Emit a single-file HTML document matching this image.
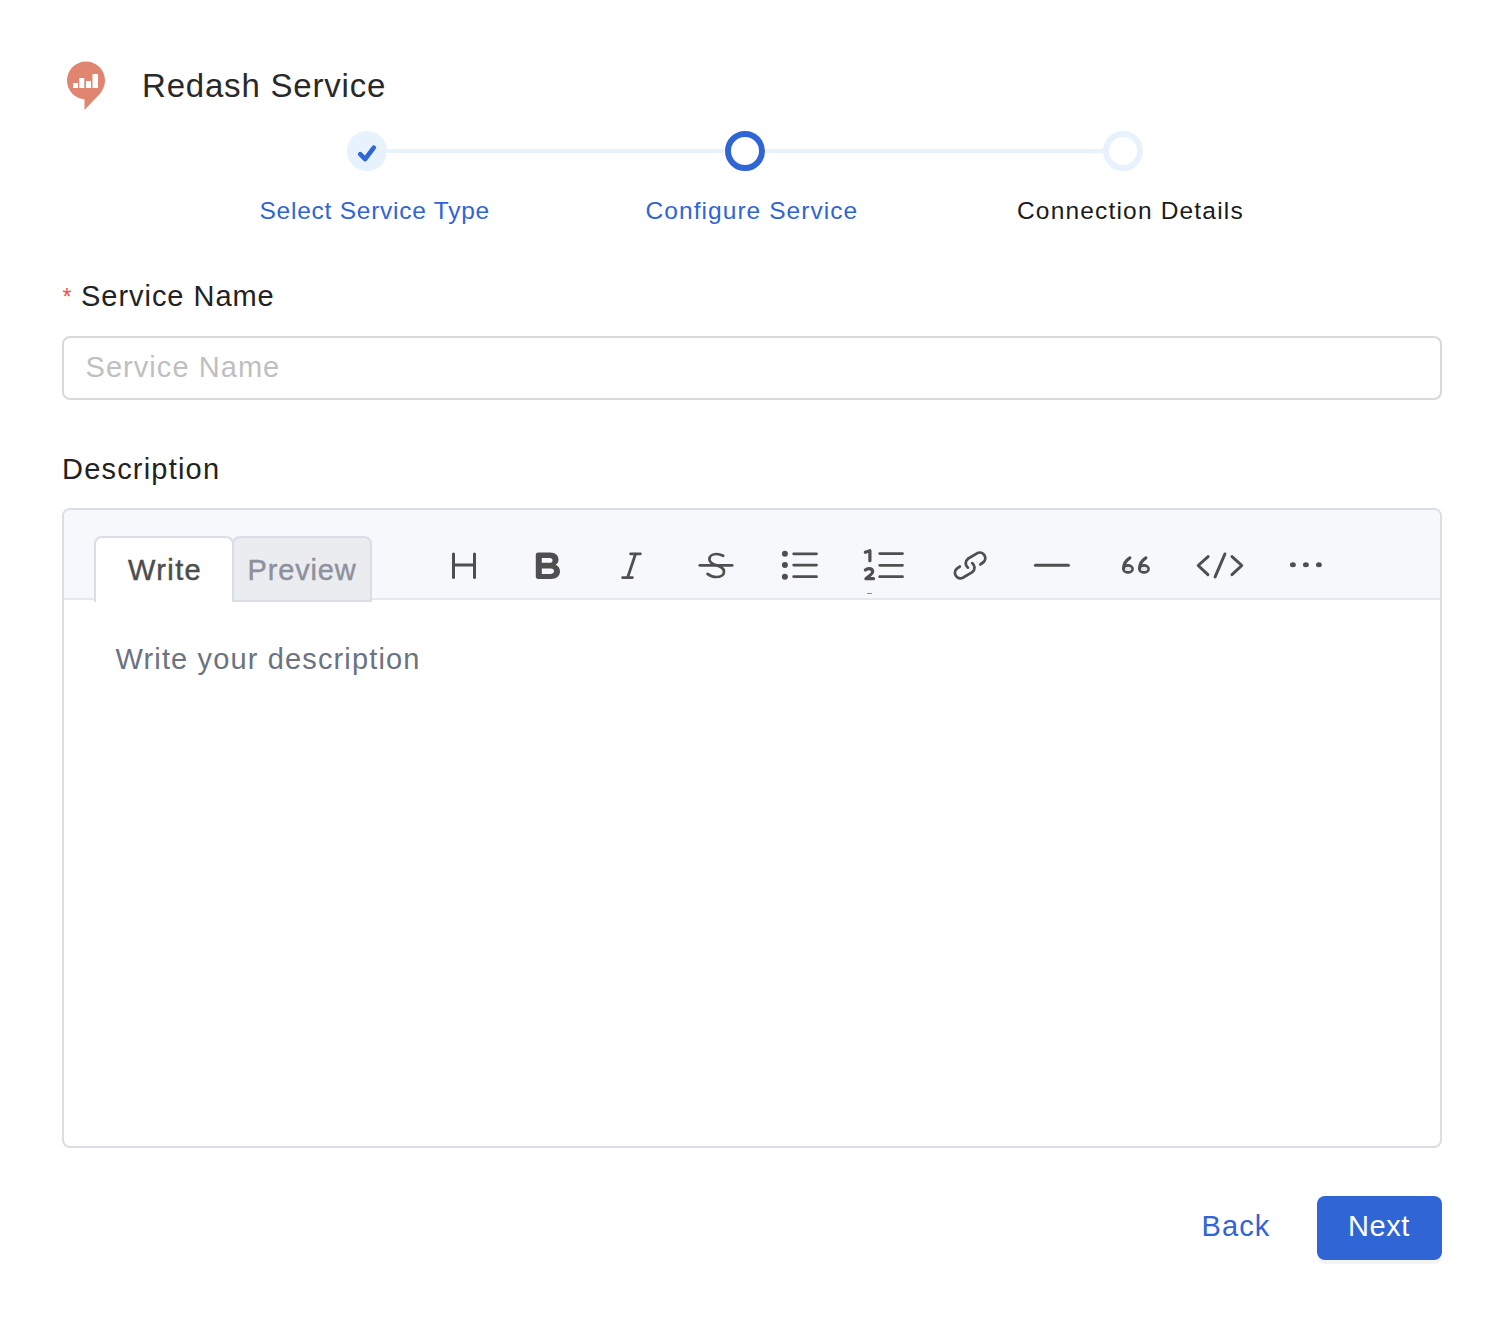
<!DOCTYPE html>
<html>
<head>
<meta charset="utf-8">
<style>
html,body{margin:0;padding:0;background:#fff;}
body{width:1506px;height:1328px;position:relative;overflow:hidden;font-family:"Liberation Sans",sans-serif;}
.t{position:absolute;white-space:nowrap;line-height:1;}
.abs{position:absolute;box-sizing:border-box;}
</style>
</head>
<body>
<!-- logo -->
<svg class="abs" style="left:60px;top:55px" width="60" height="60" viewBox="60 55 60 60">
  <circle cx="86" cy="80.5" r="19" fill="#DF8570"/>
  <path d="M84.5 95 L84.5 110 L101.3 92.3 Z" fill="#DF8570"/>
  <rect x="73" y="83" width="5" height="5" fill="#fff"/>
  <rect x="79.3" y="78" width="5" height="10" fill="#fff"/>
  <rect x="86" y="81" width="5" height="7" fill="#fff"/>
  <rect x="92.5" y="74" width="5.5" height="14" fill="#fff"/>
</svg>
<div class="t" id="title" style="left:142.00px;top:69.07px;font-size:33.00px;color:#292929;letter-spacing:0.800px;">Redash Service</div>

<!-- stepper -->
<div class="abs" style="left:387px;top:149px;width:337px;height:4px;background:#E8F2FD"></div>
<div class="abs" style="left:766px;top:149px;width:337px;height:4px;background:#E8F2FD"></div>
<div class="abs" style="left:347px;top:131px;width:40px;height:40px;border-radius:50%;background:#E8F2FD"></div>
<svg class="abs" style="left:347px;top:131px" width="40" height="40" viewBox="347 131 40 40">
  <path d="M360.2 154.2 L365.1 159.2 L373.8 147.6" fill="none" stroke="#2F65D4" stroke-width="4.6" stroke-linecap="round" stroke-linejoin="round"/>
</svg>
<div class="abs" style="left:725px;top:131px;width:40px;height:40px;border-radius:50%;border:6px solid #2F65D4;background:#fff"></div>
<div class="abs" style="left:1103px;top:131px;width:40px;height:40px;border-radius:50%;border:6px solid #E8F2FD;background:#fff"></div>

<div class="t" id="s1" style="left:259.50px;top:198.76px;font-size:24.50px;color:#2F65D4;letter-spacing:0.756px;">Select Service Type</div>
<div class="t" id="s2" style="left:645.50px;top:198.76px;font-size:24.50px;color:#2F65D4;letter-spacing:1.062px;">Configure Service</div>
<div class="t" id="s3" style="left:1017.00px;top:198.76px;font-size:24.50px;color:#1a1a1a;letter-spacing:1.176px;">Connection Details</div>

<!-- service name -->
<div class="t" id="ast" style="left:62.6px;top:286px;font-size:23px;color:#FF4D4F;">*</div>
<div class="t" id="lbl1" style="left:81.00px;top:282.45px;font-size:29.00px;color:#222;letter-spacing:0.964px;">Service Name</div>
<div class="abs" style="left:62px;top:336px;width:1380px;height:64px;border:2px solid #D9D9D9;border-radius:8px;"></div>
<div class="t" id="ph1" style="left:85.50px;top:352.95px;font-size:29.00px;color:#BFBFBF;letter-spacing:1.055px;">Service Name</div>

<!-- description -->
<div class="t" id="lbl2" style="left:62.00px;top:454.95px;font-size:29.00px;color:#222;letter-spacing:1.200px;">Description</div>
<div class="abs" style="left:62px;top:508px;width:1380px;height:640px;border:2px solid #DADDE5;border-radius:8px;overflow:hidden;">
  <div class="abs" style="left:0;top:0;width:1376px;height:90px;background:#F7F8FC;border-bottom:2px solid #E6E8EE;"></div>
</div>
<!-- tabs -->
<div class="abs" style="left:94px;top:536px;width:140px;height:66px;background:#fff;border:2px solid #DADDE5;border-bottom:none;border-radius:8px 8px 0 0;"></div>
<div class="abs" style="left:232px;top:536px;width:140px;height:66px;background:#EBECF0;border:2px solid #DADDE5;border-radius:8px 8px 0 0;"></div>
<div class="t" id="wtab" style="left:128.00px;top:556.45px;font-size:29.00px;font-weight:normal;-webkit-text-stroke:0.45px #4D4D4D;color:#4D4D4D;letter-spacing:1.400px;">Write</div>
<div class="t" id="ptab" style="left:247.50px;top:555.95px;font-size:29.00px;font-weight:normal;-webkit-text-stroke:0.45px #8E919C;color:#8E919C;letter-spacing:0.833px;">Preview</div>

<!-- toolbar icons -->
<svg class="abs" id="icons" style="left:430px;top:540px" width="920" height="50" viewBox="430 540 920 50">
  <g fill="none" stroke="#4F4F4F" stroke-width="3" stroke-linecap="round" stroke-linejoin="round">
    <!-- H -->
    <path d="M453.5 554 V577.5 M474.5 554 V577.5 M453.5 565 H474.5"/>
    <!-- I -->
    <path d="M630.6 553.8 H640.4 M622.6 577.6 H632.4 M635.6 553.8 L627.6 577.6" stroke-width="2.8"/>
    <!-- S -->
    <path d="M699.8 565.3 H732.2" stroke-width="2.7"/>
    <path d="M723.2 555.8 C720.5 554.5 718.8 554 716.5 554 C712 554 709.4 556.2 709.4 559.2 C709.4 562.5 712 563.8 715.6 565 C720 566.5 724 567.8 724 571.7 C724 575 720.5 577 716.2 577 C712 577 709.5 575.5 707.5 573.9" stroke-width="2.7"/>
    <!-- bullet list -->
    <path d="M793.7 553.8 H816.5 M793.7 565.1 H816.5 M793.7 576.7 H816.5" stroke-width="2.8"/>
    <!-- ordered list -->
    <path d="M879.7 553.6 H902.5 M879.7 565.3 H902.5 M879.7 576.7 H902.5" stroke-width="2.8"/>
    <path d="M865.3 552.3 L869.9 550.7 V560.7" stroke-width="3.2"/>
    <path d="M865.4 569.9 C866.5 569 867.6 568.7 868.9 568.7 C871.2 568.7 872.7 569.8 872.7 571.8 C872.7 573.4 871.5 574.5 865.9 578.7 H873.5" stroke-width="3.2"/>
    <!-- link -->
    <path d="M980.4 564.4 L983 562.5 A5.5 5.5 0 0 0 977.4 553.1 L967.9 558.8 A5.5 5.5 0 0 0 967.9 567.6" stroke-width="2.8"/>
    <path d="M959.8 566.6 L957.2 568.4 A5.5 5.5 0 0 0 962.8 577.8 L972.3 572.1 A5.5 5.5 0 0 0 972.2 563.2" stroke-width="2.8"/>
    <!-- hr -->
    <path d="M1035.4 565.2 H1068.4"/>
    <!-- quote 66 -->
    <ellipse cx="1128" cy="568.9" rx="4.6" ry="3.5" stroke-width="2.6" fill="#E3E6F0"/>
    <path d="M1123.6 568.6 C1123.6 563.5 1126 560.4 1129.9 557.9" stroke-width="3.1"/>
    <ellipse cx="1144" cy="568.9" rx="4.6" ry="3.5" stroke-width="2.6" fill="#E3E6F0"/>
    <path d="M1139.6 568.6 C1139.6 563.5 1142 560.4 1145.9 557.9" stroke-width="3.1"/>
    <!-- code -->
    <path d="M1208.1 556.6 L1198.2 565.5 L1207.9 574.7 M1224.9 554 L1215.1 576.9 M1232 556.6 L1241.8 565.5 L1232 574.7"/>
  </g>
  <g fill="#4F4F4F">
    <circle cx="784.9" cy="553.8" r="3"/>
    <circle cx="784.9" cy="565.1" r="3"/>
    <circle cx="784.9" cy="576.7" r="3"/>
    <ellipse cx="1292.9" cy="564.7" rx="2.95" ry="2.5"/>
    <ellipse cx="1305.9" cy="564.7" rx="2.95" ry="2.5"/>
    <ellipse cx="1318.9" cy="564.7" rx="2.95" ry="2.5"/>
    <!-- B -->
    <path fill-rule="evenodd" d="M538 552.5 H550 C555.5 552.5 558.5 555.5 558.5 559.5 C558.5 562 557.3 563.8 555.5 564.8 C558.3 565.8 560 568.3 560 571.5 C560 576 556.5 579 551 579 H538 C536.8 579 535.8 578 535.8 576.8 V554.7 C535.8 553.5 536.8 552.5 538 552.5 Z M541.8 558.1 H550 C551.5 558.1 552.5 559 552.5 560.4 C552.5 561.8 551.5 562.8 550 562.8 H541.8 Z M541.8 568.4 H551 C552.8 568.4 554 569.5 554 571.1 C554 572.8 552.8 573.9 551 573.9 H541.8 Z"/>
  </g>
</svg>

<div class="abs" style="left:866.5px;top:592.5px;width:5.5px;height:1.5px;border-radius:1px;background:#2F80F0;opacity:0.85"></div>
<div class="t" id="ph2" style="left:115.50px;top:644.95px;font-size:29.00px;color:#6B7280;letter-spacing:1.143px;">Write your description</div>

<!-- buttons -->
<div class="t" id="back" style="left:1201.50px;top:1212.45px;font-size:29.00px;color:#2F65D4;letter-spacing:1.133px;">Back</div>
<div class="abs" style="left:1317px;top:1196px;width:125px;height:64px;background:#2F65D4;border-radius:8px;box-shadow:0 4px 0 rgba(0,0,0,0.045);"></div>
<div class="t" id="next" style="left:1348.00px;top:1212.45px;font-size:29.00px;color:#fff;letter-spacing:0.600px;">Next</div>
</body>
</html>
